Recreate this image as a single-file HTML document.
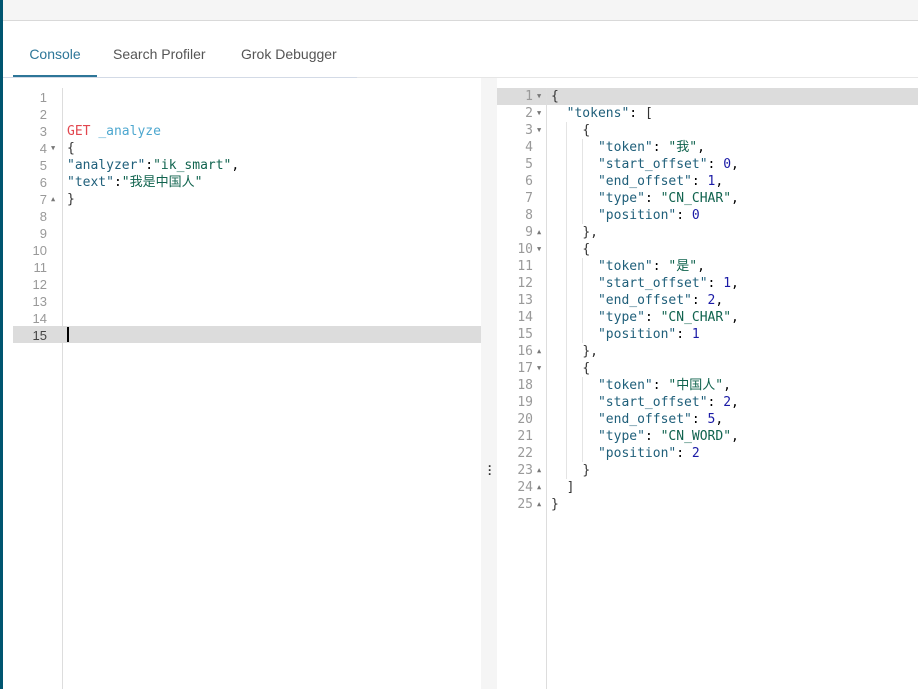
<!DOCTYPE html>
<html><head><meta charset="utf-8"><style>
body{margin:0;width:918px;height:689px;position:relative;overflow:hidden;background:#fff;font-family:"DejaVu Sans Mono","Liberation Mono","Noto Sans CJK SC",monospace;font-size:13px}
.abs{position:absolute}
.ln{position:absolute;height:17px;line-height:17px;white-space:pre}
.num{color:#999;text-align:right;width:30px}
.k{color:#1f5f7a}.s{color:#10634e}.n{color:#1a1aa6}.r{color:#e2474f}.u{color:#4da7cf}.p{color:#333}
.ar{position:absolute;font-size:7px;color:#777;line-height:17px}
</style></head><body>
<div class="abs" style="left:0;top:0;width:3px;height:689px;background:#005570"></div>
<div class="abs" style="left:3px;top:0;width:915px;height:20px;background:#f5f5f5;border-bottom:1px solid #d9d9d9"></div>
<div class="abs" style="left:13px;top:46px;font-family:'Liberation Sans',sans-serif;font-size:14px;color:#2d7698;width:84px;text-align:center">Console</div>
<div class="abs" style="left:113px;top:46px;font-family:'Liberation Sans',sans-serif;font-size:14px;color:#555">Search Profiler</div>
<div class="abs" style="left:241px;top:46px;font-family:'Liberation Sans',sans-serif;font-size:14px;color:#555">Grok Debugger</div>
<div class="abs" style="left:13px;top:75px;width:84px;height:2px;background:#2d7698"></div>
<div class="abs" style="left:3px;top:77px;width:354px;height:1px;background:#d3dae6"></div>
<div class="abs" style="left:357px;top:77px;width:561px;height:1px;background:#e6e6e6"></div>
<div class="abs" style="left:62px;top:88px;width:1px;height:601px;background:#ddd"></div>
<div class="abs" style="left:13px;top:326px;width:468px;height:17px;background:#dcdcdc"></div>
<div class="abs" style="left:67px;top:327px;width:2px;height:15px;background:#000"></div>
<div class="abs" style="left:481px;top:78px;width:16px;height:611px;background:#f5f5f5"></div>
<div class="abs" style="left:488px;top:464px;font-size:12px;color:#333;font-family:'Liberation Sans',sans-serif;line-height:4px;font-weight:bold">·<br>·<br>·</div>
<div class="abs" style="left:497px;top:88px;width:421px;height:17px;background:#dcdcdc"></div>
<div class="abs" style="left:546px;top:88px;width:1px;height:601px;background:#ddd"></div>
<div id="L"></div><div id="R"></div>
<script>
var L=['','','<span class="r">GET</span> <span class="u">_analyze</span>','<span class="p">{</span>','<span class="k">"analyzer"</span>:<span class="s">"ik_smart"</span>,','<span class="k">"text"</span>:<span class="s">"我是中国人"</span>','<span class="p">}</span>','','','','','','','',''];
var h='';
for(var i=0;i<15;i++){var t=89+i*17;
h+='<div class="ln num" style="left:17px;top:'+t+'px;font-family:\'Liberation Sans\',sans-serif;color:#999'+(i==14?';color:#444':'')+'">'+(i+1)+'</div>';
h+='<div class="ln" style="left:67px;top:'+t+'px">'+L[i]+'</div>';
if(i==3)h+='<div class="ar" style="left:51px;top:'+t+'px">▼</div>';
if(i==6)h+='<div class="ar" style="left:51px;top:'+t+'px">▲</div>';}
document.getElementById('L').innerHTML=h;
function tk(tok,so,eo,ty,po){return ['    <span class="p">{</span>','      <span class="k">"token"</span>: <span class="s">"'+tok+'"</span>,','      <span class="k">"start_offset"</span>: <span class="n">'+so+'</span>,','      <span class="k">"end_offset"</span>: <span class="n">'+eo+'</span>,','      <span class="k">"type"</span>: <span class="s">"'+ty+'"</span>,','      <span class="k">"position"</span>: <span class="n">'+po+'</span>']}
var R=['<span class="p">{</span>','  <span class="k">"tokens"</span>: <span class="p">[</span>'].concat(tk('我',0,1,'CN_CHAR',0),['    <span class="p">},</span>'],tk('是',1,2,'CN_CHAR',1),['    <span class="p">},</span>'],tk('中国人',2,5,'CN_WORD',2),['    <span class="p">}</span>','  <span class="p">]</span>','<span class="p">}</span>']);
var up={9:1,16:1,23:1,24:1,25:1},dn={1:1,2:1,3:1,10:1,17:1};
h='';
for(var i=0;i<R.length;i++){var t=88+i*17;
h+='<div class="ln num" style="left:503px;top:'+t+'px">'+(i+1)+'</div>';
h+='<div class="ln" style="left:551px;top:'+t+'px">'+R[i]+'</div>';
if(dn[i+1])h+='<div class="ar" style="left:537px;top:'+t+'px">▼</div>';
if(up[i+1])h+='<div class="ar" style="left:537px;top:'+t+'px">▲</div>';}
h+='<div class="abs" style="left:566px;top:122px;width:1px;height:357px;background:#e4e4e4"></div>';
h+='<div class="abs" style="left:582px;top:139px;width:1px;height:85px;background:#e4e4e4"></div>';
h+='<div class="abs" style="left:582px;top:258px;width:1px;height:85px;background:#e4e4e4"></div>';
h+='<div class="abs" style="left:582px;top:377px;width:1px;height:85px;background:#e4e4e4"></div>';
document.getElementById('R').innerHTML=h;
</script>
</body></html>
